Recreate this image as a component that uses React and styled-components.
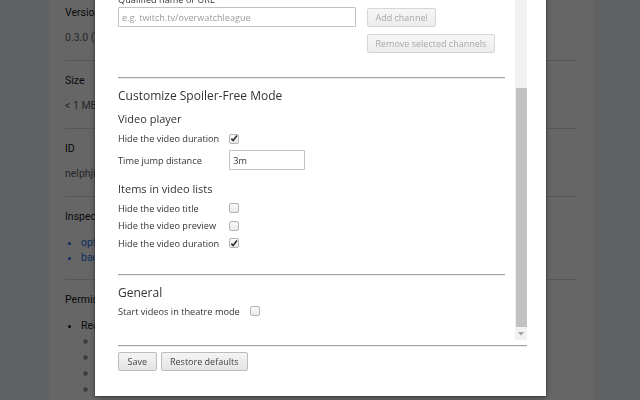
import styled, { createGlobalStyle } from 'styled-components';

const Global = createGlobalStyle`
  html, body { margin: 0; padding: 0; }
  body {
    width: 640px;
    height: 400px;
    overflow: hidden;
    font-family: "Open Sans", "Liberation Sans", sans-serif;
  }
`

// background extensions page (under the overlay)
const Page = styled.div`
  display: flex;
  height: 400px;
  background-color: #f1f3f4;
  font-family: Roboto, "Liberation Sans", sans-serif;
  color: #202124;
`

const Gutter = styled.div`
  width: 49px;
  flex-shrink: 0;
`

const Card = styled.div`
  width: 544px;
  flex-shrink: 0;
  background-color: #fff;
  padding: 0 16px;
  box-sizing: border-box;
`

const Section = styled.div`
  padding: ${({ $first }) => ($first ? '5px' : '12px')} 0 14px;
  border-bottom: 1px solid #dadce0;
`

const SectionLabel = styled.div`
  font-size: 10.5px;
  line-height: 16px;
`

const SectionValue = styled.div`
  margin-top: 9px;
  font-size: 10.5px;
  line-height: 16px;
  color: #5f6368;
`

const BgList = styled.ul`
  margin: ${({ $circle }) => ($circle ? '0' : '10px')} 0 0;
  padding-left: 16px;
  font-size: 10.5px;
  line-height: ${({ $circle }) => ($circle ? 16 : 15)}px;
  list-style: ${({ $circle }) => ($circle ? 'circle' : 'disc')};
`

const BgLink = styled.li`
  color: #1a73e8;
`

const Overlay = styled.div`
  position: fixed;
  inset: 0;
  background-color: rgba(0, 0, 0, 0.6);
`

// options dialog
const Dialog = styled.div`
  position: fixed;
  left: 95px;
  top: -30px;
  width: 451px;
  height: 426px;
  background-color: #fff;
  padding: 0 19px 0 23px;
  box-sizing: border-box;
  display: flex;
  flex-direction: column;
  box-shadow: 0 0 0 1px rgba(0, 0, 0, 0.15), 0 2px 6px rgba(0, 0, 0, 0.35);
  color: #333;
`

const ScrollArea = styled.div`
  display: flex;
  height: 370px;
  flex-shrink: 0;
`

const Content = styled.div`
  flex: 1;
  padding: 23px 10px 0 0;
  overflow: hidden;
`

const Track = styled.div`
  width: 12px;
  display: flex;
  flex-direction: column;
  background-color: #f1f1f1;
`

const TrackGap = styled.div`
  height: 118px;
`

const Thumb = styled.div`
  flex: 1;
  margin-left: 1px;
  background-color: #c1c1c1;
`

const Arrow = styled.div`
  height: 13px;
  display: flex;
  align-items: center;
  justify-content: center;
`

const Divider = styled.div`
  margin-top: ${({ $top }) => $top}px;
  border-top: 1px solid #a3a3a3;
  border-bottom: 1px solid #ececec;
`

const FieldLabel = styled.div`
  font-size: 9.2px;
  line-height: 13px;
  margin-bottom: 1px;
`

const ChannelRow = styled.div`
  display: flex;
  gap: 11px;
  align-items: flex-start;
`

const TextInput = styled.input`
  width: ${({ $w }) => $w}px;
  height: 20px;
  box-sizing: border-box;
  border: 1px solid #c3c3c3;
  border-radius: 1px;
  padding: 0 3px;
  font-family: "Open Sans", sans-serif;
  font-size: 9.1px;
  color: #333;
  outline: none;
  &::placeholder {
    color: #9a9a9a;
  }
`

const ButtonCol = styled.div`
  display: flex;
  flex-direction: column;
  align-items: flex-start;
  gap: 7px;
  margin-top: 1px;
`

const Button = styled.button`
  height: 19px;
  padding: 0 ${({ disabled }) => (disabled ? 7.5 : 8.5)}px;
  border: 1px solid ${({ disabled }) => (disabled ? '#d6d6d6' : '#bcbcbc')};
  border-radius: 2px;
  background: ${({ disabled }) =>
    disabled ? 'linear-gradient(#f6f6f6, #ececec)' : 'linear-gradient(#f4f4f4, #e4e4e4)'};
  color: ${({ disabled }) => (disabled ? '#a9a9a9' : '#444')};
  font-family: "Open Sans", sans-serif;
  font-size: 9px;
  line-height: 17px;
  white-space: nowrap;
`

const Heading = styled.div`
  margin-top: ${({ $top }) => $top}px;
  font-size: ${({ $size }) => $size}px;
  line-height: ${({ $size }) => ($size === 12 ? 16 : 15)}px;
  color: #333;
`

const OptionGrid = styled.div`
  margin-top: ${({ $top }) => $top}px;
  display: grid;
  grid-template-columns: max-content auto;
  column-gap: 10px;
  row-gap: ${({ $gap }) => $gap}px;
  align-items: center;
  justify-items: start;
  grid-auto-rows: minmax(13px, auto);
`

const OptionLabel = styled.div`
  font-size: 9.2px;
  line-height: 13px;
  color: #333;
`

const Box = styled.span`
  width: 10px;
  height: 10px;
  box-sizing: border-box;
  border: 1px solid #b4b4b4;
  border-radius: 2px;
  background: linear-gradient(#fafafa, #e9e9e9);
  display: flex;
  align-items: center;
  justify-content: center;
`

const ButtonRow = styled.div`
  margin-top: 5px;
  display: flex;
  gap: 4px;
`

const Checkbox = ({ checked }) => (
  <Box>
    {checked && (
      <svg width="9" height="9" viewBox="0 0 9 9">
        <path d="M1.5 4.6 L3.6 6.8 L7.8 1.2" fill="none" stroke="#333" strokeWidth="1.9" />
      </svg>
    )}
  </Box>
)

const App = () => {
  return (
    <>
      <Global />
      <Page>
        <Gutter />
        <Card>
          <Section $first>
            <SectionLabel>Version</SectionLabel>
            <SectionValue>0.3.0 (Development)</SectionValue>
          </Section>
          <Section>
            <SectionLabel>Size</SectionLabel>
            <SectionValue>&lt; 1 MB</SectionValue>
          </Section>
          <Section>
            <SectionLabel>ID</SectionLabel>
            <SectionValue>nelphjioffnfjaeophfgbljldenmabek</SectionValue>
          </Section>
          <Section>
            <SectionLabel>Inspect views</SectionLabel>
            <BgList>
              <BgLink>options.html</BgLink>
              <BgLink>background page</BgLink>
            </BgList>
          </Section>
          <Section>
            <SectionLabel>Permissions</SectionLabel>
            <BgList>
              <li>Read and change your data
                <BgList $circle>
                  <li>twitch.tv</li>
                  <li>www.twitch.tv</li>
                  <li>clips.twitch.tv</li>
                  <li>player.twitch.tv</li>
                </BgList>
              </li>
            </BgList>
          </Section>
        </Card>
      </Page>
      <Overlay />

      <Dialog>
        <ScrollArea>
          <Content>
            <FieldLabel>Qualified name or URL</FieldLabel>
            <ChannelRow>
              <TextInput $w={238} placeholder="e.g. twitch.tv/overwatchleague" />
              <ButtonCol>
                <Button disabled>Add channel</Button>
                <Button disabled>Remove selected channels</Button>
              </ButtonCol>
            </ChannelRow>

            <Divider $top={24} />
            <Heading $size={12} $top={9}>Customize Spoiler-Free Mode</Heading>
            <Heading $size={11} $top={7}>Video player</Heading>
            <OptionGrid $top={6} $gap={5}>
              <OptionLabel>Hide the video duration</OptionLabel>
              <Checkbox checked />
              <OptionLabel>Time jump distance</OptionLabel>
              <TextInput $w={76} defaultValue="3m" />
            </OptionGrid>

            <Heading $size={11} $top={11}>Items in video lists</Heading>
            <OptionGrid $top={5.5} $gap={4.5}>
              <OptionLabel>Hide the video title</OptionLabel>
              <Checkbox />
              <OptionLabel>Hide the video preview</OptionLabel>
              <Checkbox />
              <OptionLabel>Hide the video duration</OptionLabel>
              <Checkbox checked />
            </OptionGrid>

            <Divider $top={24} />
            <Heading $size={12} $top={9}>General</Heading>
            <OptionGrid $top={4} $gap={4}>
              <OptionLabel>Start videos in theatre mode</OptionLabel>
              <Checkbox />
            </OptionGrid>
          </Content>
          <Track>
            <TrackGap />
            <Thumb />
            <Arrow>
              <svg width="6" height="4" viewBox="0 0 6 4">
                <path d="M0 0 H6 L3 3.5 Z" fill="#a3a3a3" />
              </svg>
            </Arrow>
          </Track>
        </ScrollArea>
        <Divider $top={5} />
        <ButtonRow>
          <Button>Save</Button>
          <Button>Restore defaults</Button>
        </ButtonRow>
      </Dialog>
    </>
  )
}

export default App;
